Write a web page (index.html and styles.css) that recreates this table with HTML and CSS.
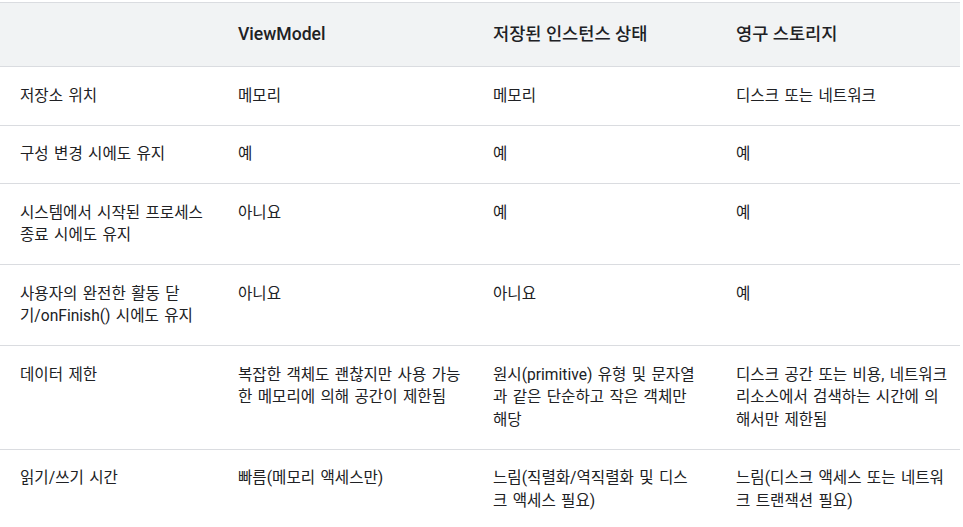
FILE: index.html
```html
<!DOCTYPE html>
<html lang="ko">
<head>
<meta charset="utf-8">
<link rel="stylesheet" href="styles.css">
</head>
<body>
<table class="cmp">
  <colgroup>
    <col class="c1"><col class="c2"><col class="c3"><col class="c4">
  </colgroup>
  <thead>
    <tr><th></th><th>ViewModel</th><th>저장된 인스턴스 상태</th><th>영구 스토리지</th></tr>
  </thead>
  <tbody>
    <tr><td>저장소 위치</td><td>메모리</td><td>메모리</td><td>디스크 또는 네트워크</td></tr>
    <tr><td>구성 변경 시에도 유지</td><td>예</td><td>예</td><td>예</td></tr>
    <tr><td>시스템에서 시작된 프로세스 종료 시에도 유지</td><td>아니요</td><td>예</td><td>예</td></tr>
    <tr><td>사용자의 완전한 활동 닫기/onFinish() 시에도 유지</td><td>아니요</td><td>아니요</td><td>예</td></tr>
    <tr><td>데이터 제한</td><td>복잡한 객체도 괜찮지만 사용 가능한 메모리에 의해 공간이 제한됨</td><td>원시(primitive) 유형 및 문자열과 같은 단순하고 작은 객체만 해당</td><td>디스크 공간 또는 비용, 네트워크 리소스에서 검색하는 시간에 의해서만 제한됨</td></tr>
    <tr><td>읽기/쓰기 시간</td><td>빠름(메모리 액세스만)</td><td>느림(직렬화/역직렬화 및 디스크 액세스 필요)</td><td>느림(디스크 액세스 또는 네트워크 트랜잭션 필요)</td></tr>
  </tbody>
</table>
</body>
</html>
```

FILE: styles.css
```css
html, body {
  margin: 0;
  padding: 0;
  background: #ffffff;
}
body {
  font-family: Roboto, "Noto Sans CJK KR", sans-serif;
  color: #202124;
}
.cmp {
  margin-top: 2px;
  width: 960px;
  table-layout: fixed;
  border-collapse: collapse;
  border-top: 1px solid #dadce0;
}
.c1 { width: 218px; }
.c2 { width: 255px; }
.c3 { width: 243px; }
.c4 { width: 244px; }
.cmp th {
  background: #f1f3f4;
  font-size: 17.6px;
  font-weight: 500;
  line-height: 24px;
  text-align: left;
  padding: 19px 12px 20px 20px;
  border-bottom: 1px solid #dadce0;
}
.cmp td {
  font-size: 15.6px;
  line-height: 22.4px;
  word-spacing: 1.5px;
  vertical-align: top;
  padding: 17.6px 12px 17.6px 20px;
  border-bottom: 1px solid #dadce0;
}
.cmp td:nth-child(3) {
  padding-right: 21px;
}
```
